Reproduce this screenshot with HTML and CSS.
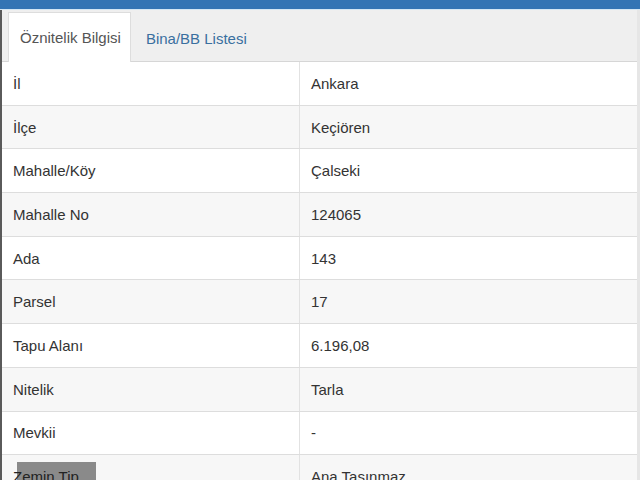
FILE: index.html
```html
<!DOCTYPE html>
<html lang="tr">
<head>
<meta charset="utf-8">
<link rel="stylesheet" href="styles.css">
</head>
<body>
<div class="topbar"></div>
<div class="panel">
  <div class="tabs">
    <div class="tab active">Öznitelik Bilgisi</div>
    <div class="tab">Bina/BB Listesi</div>
  </div>
  <table class="attrs">
    <tr><td class="k">İl</td><td class="v">Ankara</td></tr>
    <tr><td class="k">İlçe</td><td class="v">Keçiören</td></tr>
    <tr><td class="k">Mahalle/Köy</td><td class="v">Çalseki</td></tr>
    <tr><td class="k">Mahalle No</td><td class="v">124065</td></tr>
    <tr><td class="k">Ada</td><td class="v">143</td></tr>
    <tr><td class="k">Parsel</td><td class="v">17</td></tr>
    <tr><td class="k">Tapu Alanı</td><td class="v">6.196,08</td></tr>
    <tr><td class="k">Nitelik</td><td class="v">Tarla</td></tr>
    <tr><td class="k">Mevkii</td><td class="v">-</td></tr>
    <tr><td class="k"><span class="mark">Zemin Tip</span></td><td class="v">Ana Taşınmaz</td></tr>
  </table>
</div>
</body>
</html>
```
FILE: styles.css
```css
html, body {
  margin: 0;
  padding: 0;
  background: #ffffff;
  font-family: "Liberation Sans", Arial, sans-serif;
  font-size: 15px;
  color: #333333;
  overflow: hidden;
}
.topbar {
  height: 9px;
  background: #3474b4;
  border-bottom: 1px solid #d4e6f4;
}
.panel {
  border-left: 2px solid #5a5a5a;
  border-right: 3px solid #e6e6e6;
}
.tabs {
  display: flex;
  align-items: flex-end;
  background: #efefef;
  height: 51px;
  padding-left: 6px;
  border-bottom: 1px solid #d6d6d6;
}
.tab {
  height: 48px;
  line-height: 50px;
  padding: 0 12px 0 14px;
  color: #3a6f9f;
  margin-bottom: -1px;
  border: 1px solid transparent;
  border-bottom: none;
}
.tab.active {
  background: #ffffff;
  color: #555555;
  border-color: #dddddd;
  padding: 0 9px 0 11px;
  height: 49px;
}
.attrs {
  width: 100%;
  border-collapse: collapse;
}
.attrs tr:nth-child(even) td {
  background: #f7f7f7;
}
.attrs td {
  height: 42.7px;
  padding: 0;
  border-bottom: 1px solid #dddddd;
  vertical-align: middle;
}
.attrs .k {
  width: 286px;
  padding-left: 11px;
  border-right: 1px solid #e2e2e2;
}
.attrs .v {
  padding-left: 11px;
}
.mark {
  position: relative;
  z-index: 0;
  color: #222222;
}
.mark::before {
  content: "";
  position: absolute;
  z-index: -1;
  left: 4px;
  top: -6px;
  width: 79px;
  height: 24px;
  background: #8a8a8a;
}
```
